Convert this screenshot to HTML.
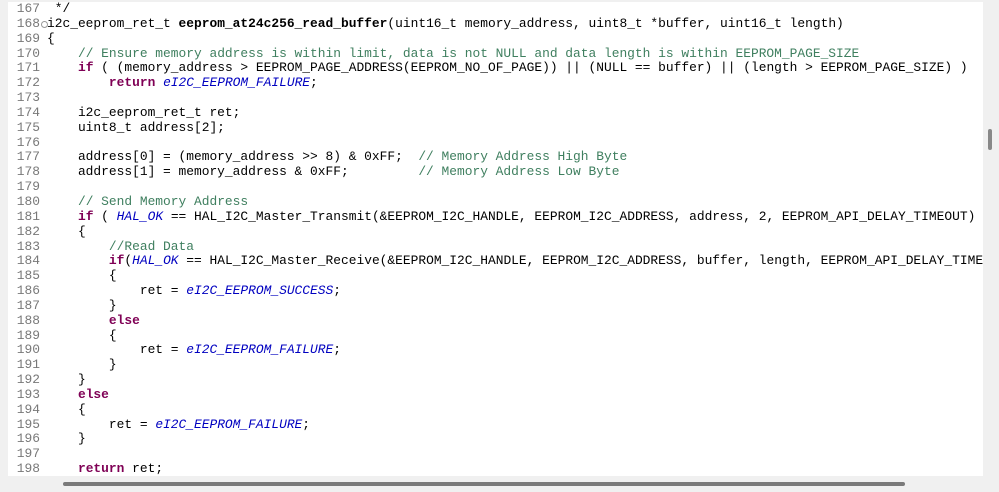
<!DOCTYPE html>
<html><head><style>
html,body{margin:0;padding:0;width:999px;height:492px;overflow:hidden;background:#f0f0f0;}
#ed{position:absolute;left:8px;top:2px;width:975px;height:474px;background:#fff;overflow:hidden;}
pre{margin:0;font-family:"Liberation Mono",monospace;font-size:12.9px;line-height:14.84px;position:absolute;top:0px;white-space:pre;color:#000;}
#num{left:0;width:32px;text-align:right;color:#787878;}
#code{left:39px;}
.c{color:#3f7f5f}.k{color:#7f0055;font-weight:bold}.e{color:#0000c0;font-style:italic}.b{font-weight:bold}
#fold{position:absolute;left:33px;top:19px;width:5px;height:5px;border:1px solid #999;border-radius:50%;}
#hs{position:absolute;left:63px;top:482px;width:842px;height:4px;background:#7a7a7a;border-radius:2px;}
#vs{position:absolute;left:988px;top:129px;width:4px;height:21px;background:#888;border-radius:2px;}
</style></head><body>
<div id="ed">
<pre id="num">167
168
169
170
171
172
173
174
175
176
177
178
179
180
181
182
183
184
185
186
187
188
189
190
191
192
193
194
195
196
197
198</pre>
<div id="fold"></div>
<pre id="code"> */
i2c_eeprom_ret_t <span class="b">eeprom_at24c256_read_buffer</span>(uint16_t memory_address, uint8_t *buffer, uint16_t length)
{
    <span class="c">// Ensure memory address is within limit, data is not NULL and data length is within EEPROM_PAGE_SIZE</span>
    <span class="k">if</span> ( (memory_address &gt; EEPROM_PAGE_ADDRESS(EEPROM_NO_OF_PAGE)) || (NULL == buffer) || (length &gt; EEPROM_PAGE_SIZE) )
        <span class="k">return</span> <span class="e">eI2C_EEPROM_FAILURE</span>;

    i2c_eeprom_ret_t ret;
    uint8_t address[2];

    address[0] = (memory_address &gt;&gt; 8) &amp; 0xFF;  <span class="c">// Memory Address High Byte</span>
    address[1] = memory_address &amp; 0xFF;         <span class="c">// Memory Address Low Byte</span>

    <span class="c">// Send Memory Address</span>
    <span class="k">if</span> ( <span class="e">HAL_OK</span> == HAL_I2C_Master_Transmit(&amp;EEPROM_I2C_HANDLE, EEPROM_I2C_ADDRESS, address, 2, EEPROM_API_DELAY_TIMEOUT) )
    {
        <span class="c">//Read Data</span>
        <span class="k">if</span>(<span class="e">HAL_OK</span> == HAL_I2C_Master_Receive(&amp;EEPROM_I2C_HANDLE, EEPROM_I2C_ADDRESS, buffer, length, EEPROM_API_DELAY_TIMEOUT) )
        {
            ret = <span class="e">eI2C_EEPROM_SUCCESS</span>;
        }
        <span class="k">else</span>
        {
            ret = <span class="e">eI2C_EEPROM_FAILURE</span>;
        }
    }
    <span class="k">else</span>
    {
        ret = <span class="e">eI2C_EEPROM_FAILURE</span>;
    }

    <span class="k">return</span> ret;</pre>
</div>
<div id="hs"></div>
<div id="vs"></div>
</body></html>
